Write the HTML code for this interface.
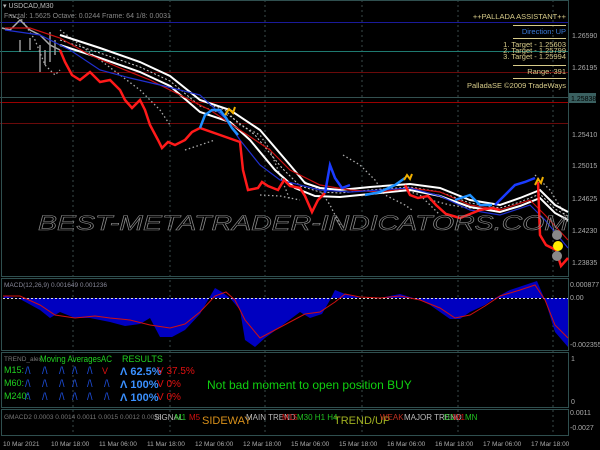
<!DOCTYPE html>
<html><head><meta charset="utf-8"><style>
html,body{margin:0;padding:0;background:#000;width:600px;height:450px;overflow:hidden}
svg{display:block;font-family:"Liberation Sans",sans-serif}
</style></head><body>
<svg width="600" height="450" viewBox="0 0 600 450">
<rect width="600" height="450" fill="#000"/>
<g stroke="#3a4a4a" stroke-dasharray="2,3" stroke-width="1">
<line x1="73" y1="0" x2="73" y2="436"/><line x1="170" y1="0" x2="170" y2="436"/><line x1="265" y1="0" x2="265" y2="436"/><line x1="362" y1="0" x2="362" y2="436"/><line x1="458" y1="0" x2="458" y2="436"/><line x1="553" y1="0" x2="553" y2="436"/>
</g>
<line x1="0" y1="22.5" x2="568" y2="22.5" stroke="#1a1a9a"/>
<line x1="0" y1="51.5" x2="568" y2="51.5" stroke="#1f7a70"/>
<line x1="0" y1="72.5" x2="568" y2="72.5" stroke="#6a0a0a"/>
<line x1="0" y1="97.5" x2="568" y2="97.5" stroke="#335050"/>
<line x1="0" y1="102.5" x2="568" y2="102.5" stroke="#9a0000"/>
<line x1="0" y1="123.5" x2="568" y2="123.5" stroke="#6a0a0a"/>
<g stroke="#2f4f4f" fill="none">
<rect x="1.5" y="0.5" width="567" height="276"/>
<rect x="1.5" y="278.5" width="567" height="72"/>
<rect x="1.5" y="352.5" width="567" height="55"/>
<rect x="1.5" y="409.5" width="567" height="26"/>
</g>
<polyline points="2,28 10,30 20,20 30,30 40,35 50,45 60,50" fill="none" stroke="#aaa" stroke-width="1.5"/>
<g stroke="#999" stroke-width="1.5"><line x1="20" y1="40" x2="20" y2="52"/><line x1="30" y1="38" x2="30" y2="50"/><line x1="40" y1="45" x2="40" y2="72"/><line x1="45" y1="50" x2="45" y2="65"/><line x1="50" y1="32" x2="50" y2="62"/><line x1="55" y1="40" x2="55" y2="55"/></g>
<g fill="none" stroke="#aaa" stroke-width="1.3" stroke-dasharray="1.5,2.5">
<polyline points="10,15 22,20 35,40 45,65 55,75 60,70"/>
<polyline points="60,30 80,45 100,60 120,75 140,90 160,110 170,125"/>
<polyline points="185,150 200,145 215,140"/>
<polyline points="210,105 225,110 240,125 260,135 270,150 280,175 290,200"/>
<polyline points="260,195 280,196 300,200"/>
<polyline points="305,182 320,190 330,205 340,225"/>
<polyline points="343,155 360,165 375,180 385,195 395,200 405,205 412,210"/>
<polyline points="430,200 450,205 470,208 490,210"/>
<polyline points="405,190 420,195 430,205 440,215"/>
<polyline points="535,175 550,190 562,210 568,222"/>
</g>
<g fill="none" stroke="#fff" stroke-width="2">
<polyline points="60,35 100,48 140,62 170,76 200,100 230,110 260,130 290,165 305,183 320,188 340,190 370,187 410,184 440,188 470,200 500,205 520,198 540,190 555,205 568,212"/>
<polyline points="60,45 100,58 140,72 170,86 200,112 230,122 250,140 275,170 295,188 315,196 340,197 370,194 410,190 440,196 470,207 500,212 520,206 540,198 555,213 568,220"/>
</g>
<g fill="none" stroke="#ccc" stroke-width="1" stroke-dasharray="2,2">
<polyline points="60,40 100,53 140,67 170,81 200,106 230,116 255,135 282,168 300,186 320,192 340,193 370,190 410,187 440,192 470,203 500,208 520,202 540,194 555,209 568,216"/>
</g>
<polyline points="5,28 30,28 60,38 90,55 120,68 150,80 180,95 210,110 240,130 270,150 290,170 320,185 350,190 380,192 410,188 440,192 470,205 500,210 530,200 545,215 568,240" fill="none" stroke="#cc1010" stroke-width="1.2"/>
<polyline points="5,30 40,35 70,50 100,70 130,78 160,85 200,95 225,118 240,140 260,165 280,180 300,185 320,190 350,192 380,190 410,188 440,196 470,210 500,215 530,205 545,220 568,248" fill="none" stroke="#2030d0" stroke-width="1.2"/>
<polyline points="60,50 65,62 72,75 80,80 90,72 100,82 110,80 120,90 125,100 132,108 140,100 145,110 150,125 158,140 162,148 168,142 175,145 185,140 192,132 200,128 240,142 243,170 248,190 258,188 262,182 268,186 278,190 284,180 290,186 300,188 305,196 312,212 318,200 325,193" fill="none" stroke="#ff1a1a" stroke-width="2.5"/>
<polyline points="405,185 410,195 418,198 428,196 436,205 446,214 460,218 470,214 480,210 492,208 500,210" fill="none" stroke="#ff1a1a" stroke-width="2.5"/>
<polyline points="538,182 540,235 546,245 556,250 561,266 568,258" fill="none" stroke="#ff1a1a" stroke-width="2.5"/>
<g fill="none" stroke-width="2.5">
<polyline points="200,128 205,115 212,110 220,110 226,118 232,128 238,135" stroke="#1e90ff"/>
<polyline points="325,193 330,165 335,178 342,188 350,185" stroke="#1a3cff"/>
<polyline points="365,195 380,192 395,185 405,178" stroke="#1e90ff"/>
<polyline points="455,200 470,195 480,205 492,205" stroke="#1e90ff"/>
<polyline points="495,205 505,195 515,185 525,182 535,178" stroke="#1a3cff"/>
</g>
<path d="M225,115 l4,-6 l4,4 l2,-6" stroke="#f0b000" stroke-width="2" fill="none"/>
<path d="M404,180 l3,-5 l3,4 l2,-5" stroke="#f0b000" stroke-width="2" fill="none"/>
<path d="M535,185 l3,-6 l3,4 l2,-6" stroke="#f0b000" stroke-width="2" fill="none"/>
<circle cx="557" cy="235" r="5" fill="#888"/><circle cx="558" cy="246" r="5" fill="#ffee00"/><circle cx="557" cy="256" r="5" fill="#888"/>
<text x="38" y="230" font-size="21" font-style="italic" fill="none" stroke="#8a8a8a" stroke-width="0.6" textLength="530" lengthAdjust="spacingAndGlyphs">BEST-METATRADER-INDICATORS.COM</text>
<text x="3" y="8" font-size="7" fill="#bbb">▾ USDCAD,M30</text>
<text x="4" y="18" font-size="7" fill="#888">Fractal: 1.5625   Octave: 0.0244   Frame: 64   1/8: 0.0031</text>
<g font-size="7.5" fill="#d8cc8a" text-anchor="end">
<text x="566" y="19">++PALLADA ASSISTANT++</text>
<text x="566" y="34" fill="#3a7ad8">Direction: UP</text>
<text x="566" y="47">1. Target - 1.25603</text>
<text x="566" y="53">2. Target - 1.25799</text>
<text x="566" y="59">3. Target - 1.25994</text>
<text x="566" y="74">Range: 391</text>
<text x="566" y="88">PalladaSE ©2009 TradeWays</text>
</g>
<g stroke="#d8cc8a" stroke-width="1"><line x1="513" y1="25.5" x2="566" y2="25.5"/><line x1="513" y1="38.5" x2="566" y2="38.5"/><line x1="513" y1="65.5" x2="566" y2="65.5"/><line x1="513" y1="78.5" x2="566" y2="78.5"/></g>
<g font-size="7" fill="#aaa">
<text x="572" y="38">1.26590</text><text x="572" y="70">1.26195</text><text x="572" y="137">1.25410</text><text x="572" y="168">1.25015</text><text x="572" y="201">1.24625</text><text x="572" y="233">1.24230</text><text x="572" y="265">1.23835</text>
<text x="570" y="287">0.000877</text><text x="570" y="300">0.00</text><text x="570" y="347">-0.002355</text>
<text x="571" y="361">1</text><text x="571" y="404">0</text>
<text x="570" y="415">0.0011</text><text x="570" y="430">-0.0027</text>
</g>
<rect x="569" y="93" width="27" height="10" fill="#3a6060"/>
<text x="571" y="101" font-size="7" fill="#000">1.25838</text>
<text x="4" y="287" font-size="6.5" fill="#889">MACD(12,26,9) 0.001649 0.001236</text>
<polygon points="3,298 5,296 20,299 40,310 50,318 60,312 75,318 90,318 110,322 125,326 140,324 150,318 160,337 172,337 185,330 200,314 208,300 215,288 222,292 230,298 240,310 245,340 255,347 265,338 280,327 300,312 310,318 322,314 330,300 335,290 345,294 360,298 380,298 400,294 420,300 430,305 440,312 450,319 460,319 470,312 485,305 495,298 510,290 525,285 537,281 545,300 555,332 568,347 568,298" fill="#0000c0"/>
<line x1="3" y1="298.5" x2="568" y2="298.5" stroke="#ddd" stroke-dasharray="2,2"/>
<polyline points="3,296 20,296 40,305 55,315 75,318 95,316 110,318 130,320 150,325 170,328 185,324 200,312 215,296 226,292 235,300 245,320 260,338 275,330 290,322 305,314 320,312 335,302 345,294 360,297 380,298 400,296 420,300 440,308 455,318 470,315 485,306 500,296 520,290 535,285 545,300 555,325 568,338" fill="none" stroke="#d01010" stroke-width="1"/>
<text x="4" y="361" font-size="6.5" fill="#777">TREND_alex</text>
<text x="40" y="362" font-size="9" fill="#20d020" textLength="72" lengthAdjust="spacingAndGlyphs">Moving AveragesAC</text>
<text x="122" y="362" font-size="9" fill="#20d020">RESULTS</text>
<g font-size="9" fill="#20d020"><text x="4" y="373">M15:</text><text x="4" y="386">M60:</text><text x="4" y="399">M240:</text></g>
<g font-size="10" fill="#1e50e0">
<text x="25" y="374">/\</text><text x="42" y="374">/\</text><text x="59" y="374">/\</text><text x="72" y="374">/\</text><text x="87" y="374">/\</text>
<text x="25" y="387">/\</text><text x="42" y="387">/\</text><text x="59" y="387">/\</text><text x="72" y="387">/\</text><text x="87" y="387">/\</text><text x="104" y="387">/\</text>
<text x="25" y="400">/\</text><text x="42" y="400">/\</text><text x="59" y="400">/\</text><text x="72" y="400">/\</text><text x="87" y="400">/\</text><text x="104" y="400">/\</text>
</g>
<text x="102" y="374" font-size="9" fill="#e01010">V</text>
<g font-size="11" font-weight="bold" fill="#3a90ff">
<text x="120" y="375">Λ 62.5%</text><text x="120" y="388">Λ 100%</text><text x="120" y="401">Λ 100%</text>
</g>
<g font-size="10" fill="#e01010">
<text x="157" y="374">V 37.5%</text><text x="157" y="387">V 0%</text><text x="157" y="400">V 0%</text>
</g>
<text x="207" y="389" font-size="12" fill="#10d010">Not bad moment to open position  BUY</text>
<text x="4" y="419" font-size="6.5" fill="#777">GMACD2 0.0003 0.0014 0.0011 0.0015 0.0012 0.0016</text>
<g font-size="8">
<text x="154" y="420" fill="#bbb">SIGNAL</text><text x="175" y="420" fill="#20c020">M1</text><text x="189" y="420" fill="#d01010">M5</text>
<text x="202" y="424" font-size="11" fill="#d8901a">SIDEWAY</text>
<text x="246" y="420" fill="#bbb">MAIN TREND</text><text x="282" y="420" fill="#d01010">M15</text><text x="297" y="420" fill="#20c020">M30 H1 H4</text>
<text x="334" y="424" font-size="11" fill="#a0b020">TREND/UP</text>
<text x="380" y="420" fill="#c03020">WEAK</text>
<text x="404" y="420" fill="#bbb">MAJOR TREND</text><text x="444" y="420" fill="#20c020">D1</text><text x="453" y="420" fill="#d01010">W1</text><text x="465" y="420" fill="#20c020">MN</text>
</g>
<g font-size="6.5" fill="#aaa">
<text x="3" y="446">10 Mar 2021</text><text x="51" y="446">10 Mar 18:00</text><text x="99" y="446">11 Mar 06:00</text><text x="147" y="446">11 Mar 18:00</text><text x="195" y="446">12 Mar 06:00</text><text x="243" y="446">12 Mar 18:00</text><text x="291" y="446">15 Mar 06:00</text><text x="339" y="446">15 Mar 18:00</text><text x="387" y="446">16 Mar 06:00</text><text x="435" y="446">16 Mar 18:00</text><text x="483" y="446">17 Mar 06:00</text><text x="531" y="446">17 Mar 18:00</text>
</g>
</svg>
</body></html>
